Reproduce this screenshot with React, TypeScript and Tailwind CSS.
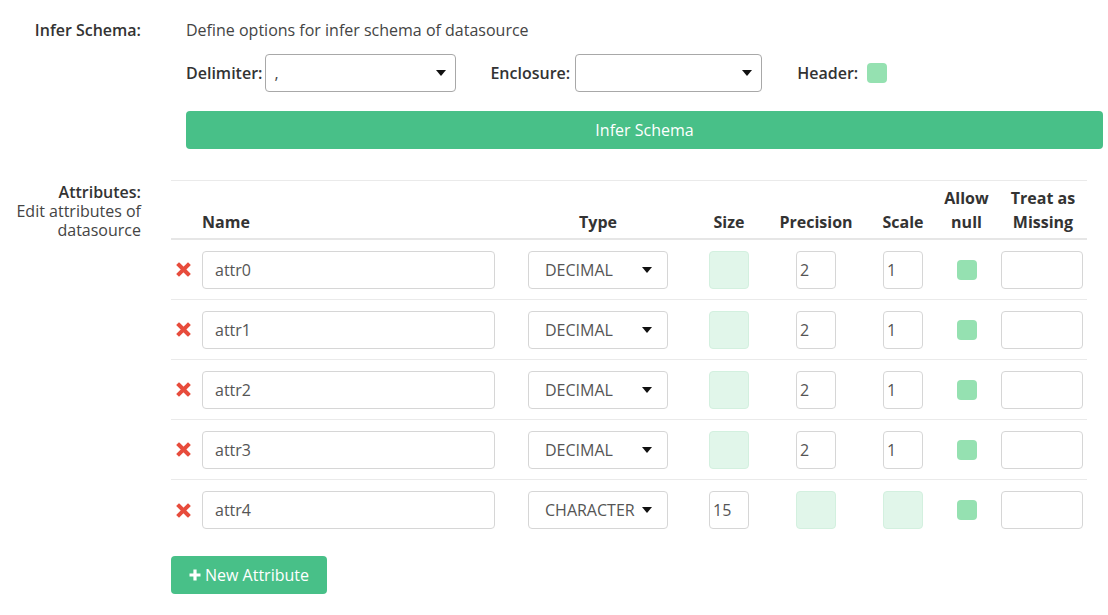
import React from 'react';

interface Attr {
  name: string;
  type: string;
  size: string;
  precision: string;
  scale: string;
}

const ATTRS: Attr[] = [
  { name: 'attr0', type: 'DECIMAL', size: '', precision: '2', scale: '1' },
  { name: 'attr1', type: 'DECIMAL', size: '', precision: '2', scale: '1' },
  { name: 'attr2', type: 'DECIMAL', size: '', precision: '2', scale: '1' },
  { name: 'attr3', type: 'DECIMAL', size: '', precision: '2', scale: '1' },
  { name: 'attr4', type: 'CHARACTER', size: '15', precision: '', scale: '' },
];

function Caret() {
  return (
    <svg width="10" height="6" viewBox="0 0 10 6" className="shrink-0">
      <path d="M0 0 L10 0 L5 6 Z" fill="#111" />
    </svg>
  );
}

function Checkbox() {
  return <div className="w-[20px] h-[20px] rounded-[4px] bg-[#95e1b1]" />;
}

function RemoveIcon() {
  return (
    <svg width="15" height="15" viewBox="0 0 15 15">
      <path d="M3 3 L12 12 M12 3 L3 12" stroke="#e74c3c" strokeWidth="4" strokeLinecap="square" />
    </svg>
  );
}

function SmallInput({ value }: { value: string }) {
  if (!value) {
    return <div className="w-[40px] h-[38px] rounded-[4px] border border-[#d3f0df] bg-[#e1f6ea]" />;
  }
  return (
    <div className="w-[40px] h-[38px] rounded-[4px] border border-[#d6d6d6] bg-white flex items-center pl-[3px] text-[16px] text-[#555]">
      {value}
    </div>
  );
}

export default function App() {
  return (
    <div
      className="min-h-screen bg-white text-[#333] text-[16px] pt-[20px]"
      style={{ fontFamily: '"Open Sans", "Noto Sans", sans-serif' }}
    >
      {/* Infer schema */}
      <div className="flex">
        <div className="w-[141px] shrink-0 text-right font-semibold leading-[20px]">Infer Schema:</div>
        <div className="ml-[45px] flex-1 pr-[5px]">
          <p className="leading-[20px] text-[#444]">Define options for infer schema of datasource</p>
          <div className="flex items-center mt-[14px] h-[38px]">
            <span className="font-semibold">Delimiter:</span>
            <div className="ml-[3px] w-[191px] h-[38px] rounded-[4px] border border-[#a8a8a8] flex items-center justify-between pl-[8px] pr-[9px]">
              <span className="text-[#444]">,</span>
              <Caret />
            </div>
            <span className="ml-[34px] font-semibold">Enclosure:</span>
            <div className="ml-[5px] w-[187px] h-[38px] rounded-[4px] border border-[#a8a8a8] flex items-center justify-end pr-[9px]">
              <Caret />
            </div>
            <span className="ml-[35px] font-semibold">Header:</span>
            <div className="ml-[9px]">
              <Checkbox />
            </div>
          </div>
          <button className="mt-[19px] w-full h-[38px] rounded-[4px] bg-[#48c088] text-white text-[16px] font-normal">
            Infer Schema
          </button>
        </div>
      </div>

      {/* Attributes */}
      <div className="flex mt-[31px]">
        <div className="w-[141px] shrink-0 text-right pt-[2px]">
          <div className="font-semibold leading-[20px]">Attributes:</div>
          <div className="leading-[19px] text-[#444]">
            Edit attributes of
            <br />
            datasource
          </div>
        </div>
        <div className="ml-[30px]">
          <div className="w-[916px] border-t border-[#eaeaea]">
            {/* header */}
            <div className="flex items-end h-[59px] border-b-2 border-[#e6e6e6] pb-[4px] font-bold text-[16px] leading-[24px] text-[#333]">
              <div className="w-[31px]" />
              <div className="w-[310px]">Name</div>
              <div className="w-[172px] flex justify-center">Type</div>
              <div className="w-[90px] flex justify-center">Size</div>
              <div className="w-[84px] flex justify-center">Precision</div>
              <div className="w-[90px] flex justify-center">Scale</div>
              <div className="w-[37px] flex justify-center">
                <div className="w-max text-center">
                  Allow
                  <br />
                  null
                </div>
              </div>
              <div className="w-[102px] flex justify-center pl-[14px]">
                <div className="w-max text-center">
                  Treat as
                  <br />
                  Missing
                </div>
              </div>
            </div>
            {/* rows */}
            {ATTRS.map((a, i) => (
              <div
                key={a.name}
                className={`flex items-center h-[60px] ${i < ATTRS.length - 1 ? 'border-b border-[#eaeaea]' : ''}`}
              >
                <div className="w-[31px] flex pl-[5px]">
                  <RemoveIcon />
                </div>
                <div className="w-[310px]">
                  <div className="w-[293px] h-[38px] rounded-[4px] border border-[#d6d6d6] flex items-center px-[12px] text-[16px] text-[#555]">
                    {a.name}
                  </div>
                </div>
                <div className="w-[172px] flex justify-center">
                  <div className="w-[140px] h-[38px] rounded-[4px] border border-[#d6d6d6] flex items-center pl-[16px] pr-[15px] text-[16px] text-[#555]">
                    <span className="flex-1">{a.type}</span>
                    <Caret />
                  </div>
                </div>
                <div className="w-[90px] flex justify-center">
                  <SmallInput value={a.size} />
                </div>
                <div className="w-[84px] flex justify-center">
                  <SmallInput value={a.precision} />
                </div>
                <div className="w-[90px] flex justify-center">
                  <SmallInput value={a.scale} />
                </div>
                <div className="w-[37px] flex justify-center">
                  <Checkbox />
                </div>
                <div className="w-[102px] pl-[16px]">
                  <div className="w-[82px] h-[38px] rounded-[4px] border border-[#d6d6d6]" />
                </div>
              </div>
            ))}
          </div>
          <button className="mt-[16px] h-[38px] w-[156px] rounded-[4px] bg-[#48c088] text-white text-[16px] font-normal flex items-center justify-center gap-[4px]">
            <svg width="12" height="12" viewBox="0 0 12 12">
              <path d="M6 0.5 V11.5 M0.5 6 H11.5" stroke="#fff" strokeWidth="3.2" />
            </svg>
            New Attribute
          </button>
        </div>
      </div>
    </div>
  );
}
